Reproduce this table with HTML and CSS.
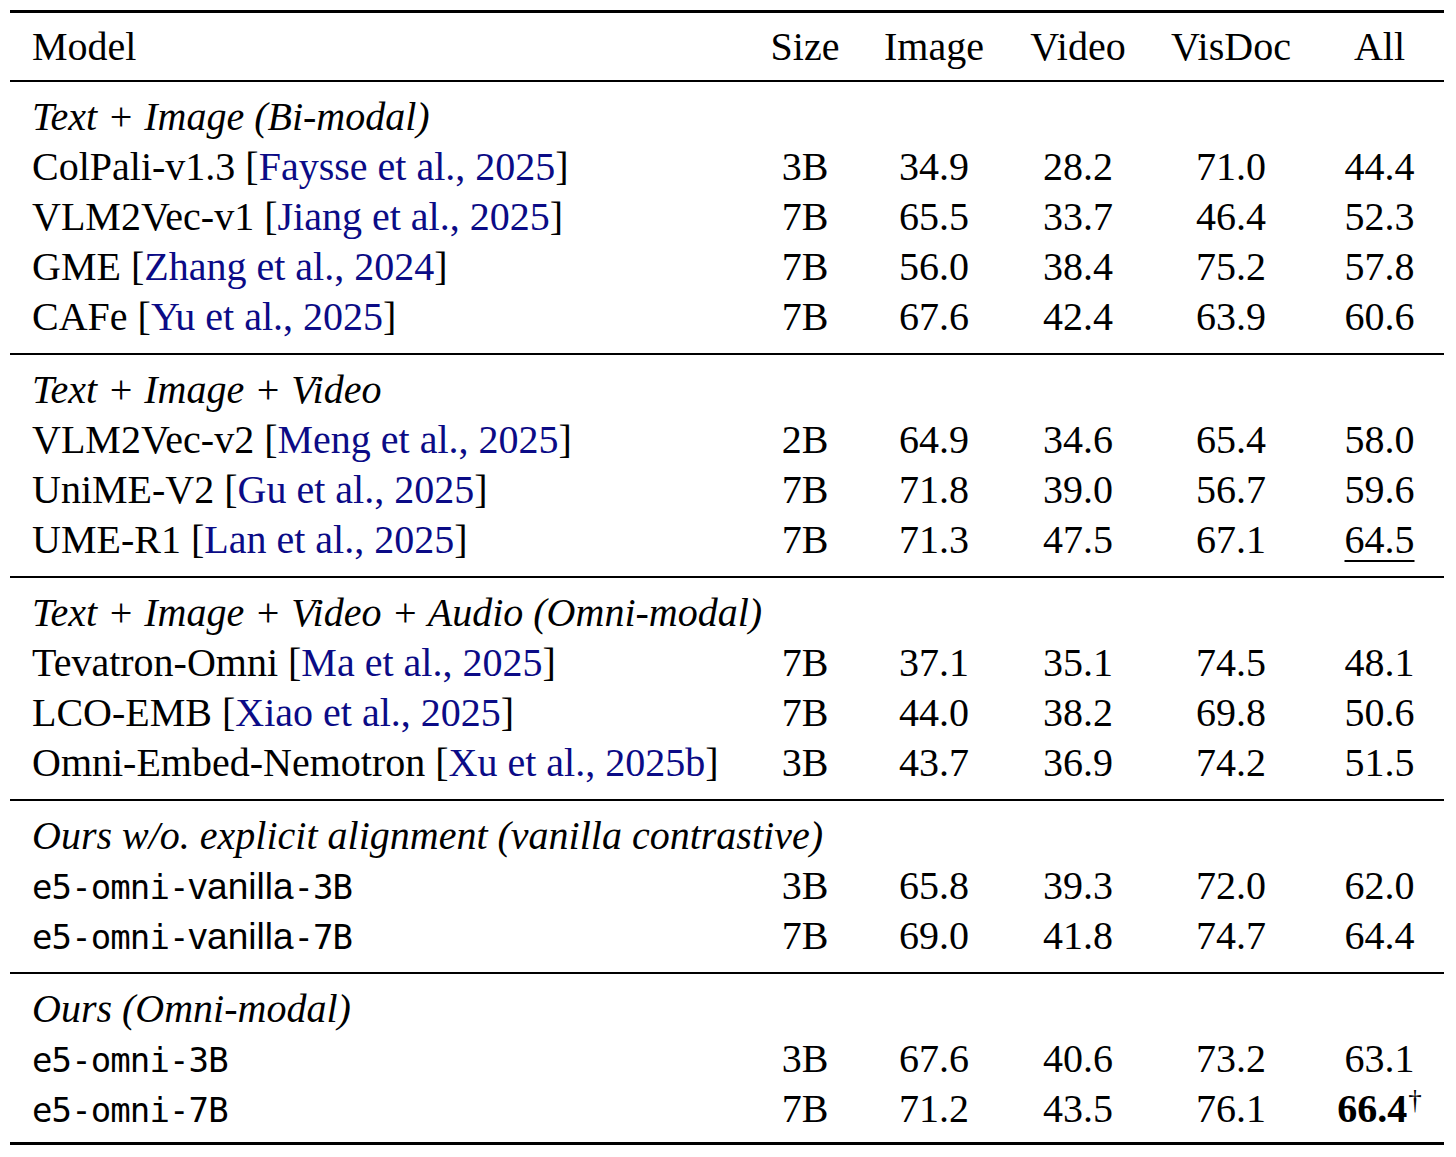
FILE: index.html
```html
<!DOCTYPE html>
<html>
<head>
<meta charset="utf-8">
<link rel="stylesheet" href="styles.css">
</head>
<body>
<div class="tbl">
  <div class="row hdr">
    <div>Model</div><div class="c">Size</div><div class="c">Image</div><div class="c">Video</div><div class="c">VisDoc</div><div class="c">All</div>
  </div>

  <div class="grp">
    <div class="sec">Text + Image (Bi-modal)</div>
    <div class="row"><div>ColPali-v1.3 [<span class="cite">Faysse et al., 2025</span>]</div><div class="c">3B</div><div class="c">34.9</div><div class="c">28.2</div><div class="c">71.0</div><div class="c">44.4</div></div>
    <div class="row"><div>VLM2Vec-v1 [<span class="cite">Jiang et al., 2025</span>]</div><div class="c">7B</div><div class="c">65.5</div><div class="c">33.7</div><div class="c">46.4</div><div class="c">52.3</div></div>
    <div class="row"><div>GME [<span class="cite">Zhang et al., 2024</span>]</div><div class="c">7B</div><div class="c">56.0</div><div class="c">38.4</div><div class="c">75.2</div><div class="c">57.8</div></div>
    <div class="row"><div>CAFe [<span class="cite">Yu et al., 2025</span>]</div><div class="c">7B</div><div class="c">67.6</div><div class="c">42.4</div><div class="c">63.9</div><div class="c">60.6</div></div>
  </div>

  <div class="grp">
    <div class="sec">Text + Image + Video</div>
    <div class="row"><div>VLM2Vec-v2 [<span class="cite">Meng et al., 2025</span>]</div><div class="c">2B</div><div class="c">64.9</div><div class="c">34.6</div><div class="c">65.4</div><div class="c">58.0</div></div>
    <div class="row"><div>UniME-V2 [<span class="cite">Gu et al., 2025</span>]</div><div class="c">7B</div><div class="c">71.8</div><div class="c">39.0</div><div class="c">56.7</div><div class="c">59.6</div></div>
    <div class="row"><div>UME-R1 [<span class="cite">Lan et al., 2025</span>]</div><div class="c">7B</div><div class="c">71.3</div><div class="c">47.5</div><div class="c">67.1</div><div class="c"><span class="ul">64.5</span></div></div>
  </div>

  <div class="grp">
    <div class="sec">Text + Image + Video + Audio (Omni-modal)</div>
    <div class="row"><div>Tevatron-Omni [<span class="cite">Ma et al., 2025</span>]</div><div class="c">7B</div><div class="c">37.1</div><div class="c">35.1</div><div class="c">74.5</div><div class="c">48.1</div></div>
    <div class="row"><div>LCO-EMB [<span class="cite">Xiao et al., 2025</span>]</div><div class="c">7B</div><div class="c">44.0</div><div class="c">38.2</div><div class="c">69.8</div><div class="c">50.6</div></div>
    <div class="row"><div>Omni-Embed-Nemotron [<span class="cite">Xu et al., 2025b</span>]</div><div class="c">3B</div><div class="c">43.7</div><div class="c">36.9</div><div class="c">74.2</div><div class="c">51.5</div></div>
  </div>

  <div class="grp">
    <div class="sec">Ours w/o. explicit alignment (vanilla contrastive)</div>
    <div class="row"><div><span class="mono">e5-omni-<span class="sans">vanilla</span>-3B</span></div><div class="c">3B</div><div class="c">65.8</div><div class="c">39.3</div><div class="c">72.0</div><div class="c">62.0</div></div>
    <div class="row"><div><span class="mono">e5-omni-<span class="sans">vanilla</span>-7B</span></div><div class="c">7B</div><div class="c">69.0</div><div class="c">41.8</div><div class="c">74.7</div><div class="c">64.4</div></div>
  </div>

  <div class="grp last">
    <div class="sec">Ours (Omni-modal)</div>
    <div class="row"><div><span class="mono">e5-omni-3B</span></div><div class="c">3B</div><div class="c">67.6</div><div class="c">40.6</div><div class="c">73.2</div><div class="c">63.1</div></div>
    <div class="row"><div><span class="mono">e5-omni-7B</span></div><div class="c">7B</div><div class="c">71.2</div><div class="c">43.5</div><div class="c">76.1</div><div class="c"><b class="best">66.4</b><sup class="dag">†</sup></div></div>
  </div>
</div>
</body>
</html>
```

FILE: styles.css
```css
html, body {
  margin: 0;
  padding: 0;
  background: #ffffff;
}

body {
  font-family: "Liberation Serif", "Times New Roman", serif;
  font-size: 40px;
  color: #000000;
}

.tbl {
  margin: 10px 0 0 10px;
  width: 1434px;
  border-top: 3px solid #000;
  border-bottom: 3px solid #000;
}

.row {
  display: grid;
  grid-template-columns: 1fr 108px 150px 138px 168px 129px;
  padding-left: 22px;
  height: 50px;
  line-height: 50px;
  white-space: nowrap;
}

.row > .c {
  text-align: center;
}

.hdr {
  padding-top: 9px;
  padding-bottom: 8px;
  border-bottom: 2px solid #000;
}

.grp {
  padding: 10px 0 11px;
}

.grp + .grp {
  border-top: 2px solid #000;
}

.grp.last {
  padding-bottom: 8px;
}

.sec {
  padding-left: 22px;
  height: 50px;
  line-height: 50px;
  font-style: italic;
  white-space: nowrap;
}

.cite {
  color: #0b0b86;
}

.mono {
  font-family: "DejaVu Sans Mono", "Liberation Mono", monospace;
  font-size: 34px;
  letter-spacing: -0.9px;
  line-height: 1;
  color: #000;
}

.mono .sans {
  font-family: "Liberation Sans", Arial, sans-serif;
  font-size: 37px;
  letter-spacing: 0;
}

.ul {
  text-decoration: underline;
  text-decoration-thickness: 2px;
  text-underline-offset: 7px;
}

.best {
  font-weight: bold;
}

.dag {
  font-size: 27px;
  line-height: 1;
  vertical-align: 13px;
  margin-left: 1px;
}
```
